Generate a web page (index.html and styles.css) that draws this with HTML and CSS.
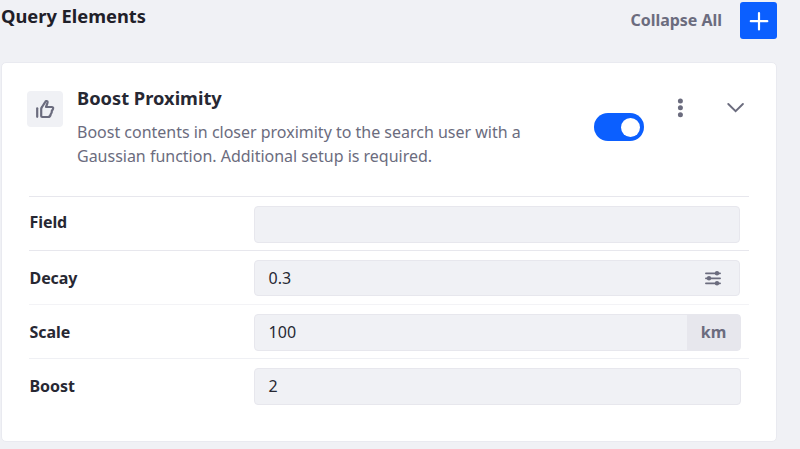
FILE: index.html
```html
<!DOCTYPE html>
<html lang="en">
<head>
<meta charset="utf-8">
<title>Query Elements</title>
<link rel="stylesheet" href="styles.css">
</head>
<body>
<main class="builder">
  <header class="toolbar">
    <h1 class="heading">Query Elements</h1>
    <button class="collapse">Collapse All</button>
    <button class="add" aria-label="Add">
      <svg width="37" height="37" viewBox="0 0 37 37"><path d="M19 11v16.500M10.800 19.200h16.500" stroke="#fff" stroke-width="2.200" stroke-linecap="round"/></svg>
    </button>
  </header>
  <section class="card">
    <div class="card-header">
      <span class="sticker">
        <svg width="20" height="20" viewBox="0 0 20 20" fill="none" stroke="#6b6c7e" stroke-width="2.200" stroke-linejoin="round" stroke-linecap="round"><path d="M2.200 9.300v8.500"/><path d="M6.200 17V10Q6.200 9 7 8L10 3.300Q11.200 1.300 12.400 2.400Q13 3 12.300 4.500L11 8H17Q18.600 8.200 18 10Q17.300 11.300 16.800 12Q17 14 15.800 15Q15.300 18 13 18H7.200Q6.200 18 6.200 17Z"/></svg>
      </span>
      <div class="summary">
        <h2 class="title">Boost Proximity</h2>
        <p class="description">Boost contents in closer proximity to the search user with a Gaussian function. Additional setup is required.</p>
      </div>
      <button class="toggle" aria-label="Enabled"><span class="knob"></span></button>
      <svg class="menu" width="6" height="20" viewBox="0 0 6 20" fill="#6b6c7e"><circle cx="3.400" cy="3" r="2.500"/><circle cx="3.400" cy="9.800" r="2.500"/><circle cx="3.400" cy="16.700" r="2.500"/></svg>
      <svg class="chevron" width="18" height="12" viewBox="0 0 18 12" fill="none" stroke="#6b6c7e" stroke-width="1.900" stroke-linecap="round"><path d="M1.300 2L8.600 9.200L15.900 2"/></svg>
    </div>
    <div class="fields">
      <div class="row first">
        <span class="label">Field</span>
        <div class="input"></div>
      </div>
      <div class="row second">
        <span class="label">Decay</span>
        <div class="input short"><span>0.3</span>
          <svg class="sliders" width="16" height="16" viewBox="0 0 16 16" stroke="#6b6c7e" fill="#6b6c7e" stroke-width="1.700" stroke-linecap="round"><path d="M.9 3.300h14.200M.9 8.300h14.200M.9 13.300h14.200"/><g stroke="none"><circle cx="12" cy="3.300" r="2.200"/><circle cx="4" cy="8.300" r="2.200"/><circle cx="12" cy="13.300" r="2.200"/></g></svg>
        </div>
      </div>
      <div class="row faint">
        <span class="label">Scale</span>
        <div class="input wide"><span>100</span><span class="unit">km</span></div>
      </div>
      <div class="row light">
        <span class="label">Boost</span>
        <div class="input wide"><span>2</span></div>
      </div>
    </div>
  </section>
</main>
</body>
</html>
```
FILE: styles.css
```css
* { box-sizing: border-box; }
body {
  margin: 0;
  height: 449px;
  overflow: hidden;
  background: #f0f1f5;
  color: #272833;
  font: 16px/24px "Noto Sans", sans-serif;
}
button { border: 0; padding: 0; font: inherit; }
svg { display: block; }
.builder { width: 777px; padding-left: 1px; }
.toolbar { display: flex; height: 62px; }
.heading { margin: 4px auto 0 0; font-size: 18.3px; font-weight: 700; line-height: 24px; color: #1f2029; }
.collapse {
  height: 24px;
  margin: 8px 18px 0 0;
  background: none;
  color: #6b6c7e;
  font-weight: 700;
  letter-spacing: -.04px;
}
.add {
  width: 37px;
  height: 37px;
  margin-top: 2px;
  border-radius: 3px;
  background: #0b5fff;
}
.card {
  height: 380px;
  padding: 28px 27px 0 25px;
  border: 1px solid #e9eaf0;
  border-radius: 5px;
  background: #fff;
}
.card-header { display: flex; height: 105px; }
.sticker {
  display: grid;
  place-items: center;
  width: 36px;
  height: 36px;
  margin-right: 14px;
  border-radius: 4px;
  background: #f0f1f5;
}
.summary { width: 470px; margin-right: 47px; }
.title { margin: -5px 0 10px; font-size: 18.3px; font-weight: 700; line-height: 24px; }
.description { margin: 0; color: #6b6c7e; letter-spacing: -.01px; }
.toggle {
  display: flex;
  justify-content: flex-end;
  align-items: center;
  width: 50px;
  height: 28px;
  margin-top: 22px;
  padding-right: 4px;
  border-radius: 14px;
  background: #0b5fff;
}
.knob { width: 19px; height: 19px; border-radius: 50%; background: #fff; }
.menu { margin: 7px 0 0 33px; }
.chevron { margin: 11px 0 0 44px; }
.fields { width: 720px; margin-left: 2px; }
.row {
  display: flex;
  height: 54px;
  padding-top: 9px;
  border-top: 1px solid #e7e7ed;
}
.faint { border-color: #f3f3f6; }
.light { border-color: #eff0f4; }
.label { width: 225px; padding: 6px 0 0 .5px; font-weight: 700; letter-spacing: -.07px; }
.first .label { padding-top: 4px; }
.input {
  display: flex;
  justify-content: space-between;
  align-items: center;
  width: 486px;
  height: 37px;
  padding: 0 0 1px 13.6px;
  border: 1px solid #e7e7ed;
  border-radius: 4px;
  background: #f0f1f5;
}
.short { height: 36px; }
.wide { width: 487px; padding-bottom: 0; }
.wide span { line-height: 22px; padding-bottom: 1px; }
.sliders { margin-right: 18px; }
.input .unit {
  display: grid;
  place-items: center;
  width: 53px;
  height: 35px;
  padding-bottom: 2px;
  background: #e7e7ed;
  color: #6b6c7e;
  font-weight: 700;
}
```
